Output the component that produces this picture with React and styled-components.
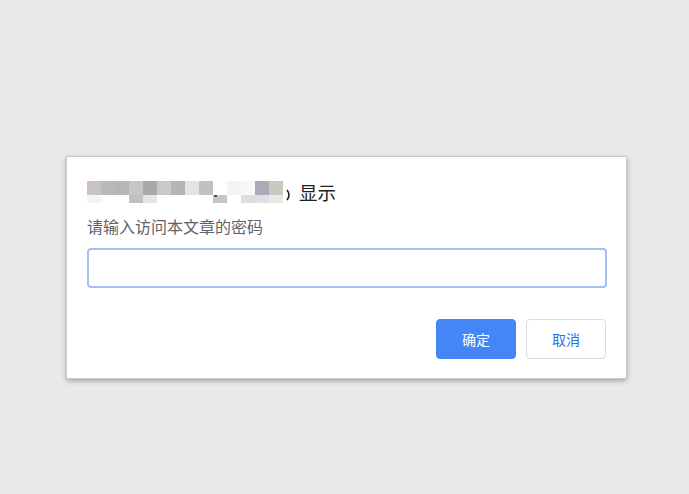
import React from "react";
import styled, { createGlobalStyle } from "styled-components";

const GlobalStyle = createGlobalStyle`
	html, body {
		margin: 0;
		padding: 0;
		background: #e9e9e9;
		font-family: "Noto Sans CJK SC", "Noto Sans", "Liberation Sans", sans-serif;
	}
`;

const Page = styled.div`
	width: 689px;
	height: 494px;
	box-sizing: border-box;
	padding: 156px 0 0 66px;
`;

const Dialog = styled.div`
	width: 561px;
	box-sizing: border-box;
	padding: 24px 20px 19px 20px;
	background: #fff;
	border: 1px solid #c9c9c9;
	border-radius: 2px;
	box-shadow: 0 2px 5px rgba(0, 0, 0, 0.3);
	display: flex;
	flex-direction: column;
`;

const TitleRow = styled.div`
	display: flex;
	align-items: center;
	height: 22px;
`;

const Title = styled.span`
	font-size: 18.5px;
	line-height: 22px;
	color: #202124;
	margin-left: 2px;
`;

const Message = styled.div`
	margin-top: 13px;
	font-size: 16px;
	line-height: 20px;
	color: #5f6368;
`;

const Input = styled.input`
	margin-top: 12px;
	width: 520px;
	height: 40px;
	box-sizing: border-box;
	border: 2px solid #a4c2f4;
	border-radius: 4px;
	outline: none;
	padding: 0 8px;
	font-size: 14px;
`;

const Actions = styled.div`
	margin-top: 31px;
	display: flex;
	justify-content: flex-end;
	gap: 10px;
`;

const Button = styled.button`
	width: 80px;
	height: 40px;
	box-sizing: border-box;
	border-radius: 4px;
	font-family: inherit;
	font-size: 14px;
	cursor: pointer;
	border: 1px solid ${(p) => (p.primary ? "#4486f5" : "#dadce0")};
	background: ${(p) => (p.primary ? "#4486f5" : "#fff")};
	color: ${(p) => (p.primary ? "#fff" : "#1a73e8")};
`;

const topRow = [
	"#cbc3c3", "#b8b9b8", "#b4b6b7", "#c3c7c8", "#a9a9a9", "#c9c9c9", "#b9b4b2",
	"#e3e5e4", "#c0c1c3", "#ffffff", "#f4f4f0", "#f5f9fa", "#a9abb8", "#cbc8c0",
];
const bottomRow = [
	"#f7f3f0", "#ffffff", "#ffffff", "#c0c0c0", "#e5e5e5", "#ffffff", "#ffffff",
	"#ffffff", "#ffffff", "#c8c5c4", "#ffffff", "#dcdde0", "#e2dfe0", "#e8e8e6",
];

const Mosaic = () => (
	<svg width="210" height="22" viewBox="0 0 210 22">
		{topRow.map((c, i) => (
			<rect key={"t" + i} x={i * 14} y="0" width="14" height="14" fill={c} />
		))}
		{bottomRow.map((c, i) => (
			<rect key={"b" + i} x={i * 14} y="14" width="14" height="8" fill={c} />
		))}
		<rect x="127" y="14" width="3" height="2" fill="#555" />
		<path d="M200 9 Q204 14 200 19" stroke="#202124" strokeWidth="1.6" fill="none" />
	</svg>
);

const App = () => {
	return (
		<Page>
			<GlobalStyle />
			<Dialog>
				<TitleRow>
					<Mosaic />
					<Title>显示</Title>
				</TitleRow>
				<Message>请输入访问本文章的密码</Message>
				<Input type="password" />
				<Actions>
					<Button primary>确定</Button>
					<Button>取消</Button>
				</Actions>
			</Dialog>
		</Page>
	);
};

export default App;
